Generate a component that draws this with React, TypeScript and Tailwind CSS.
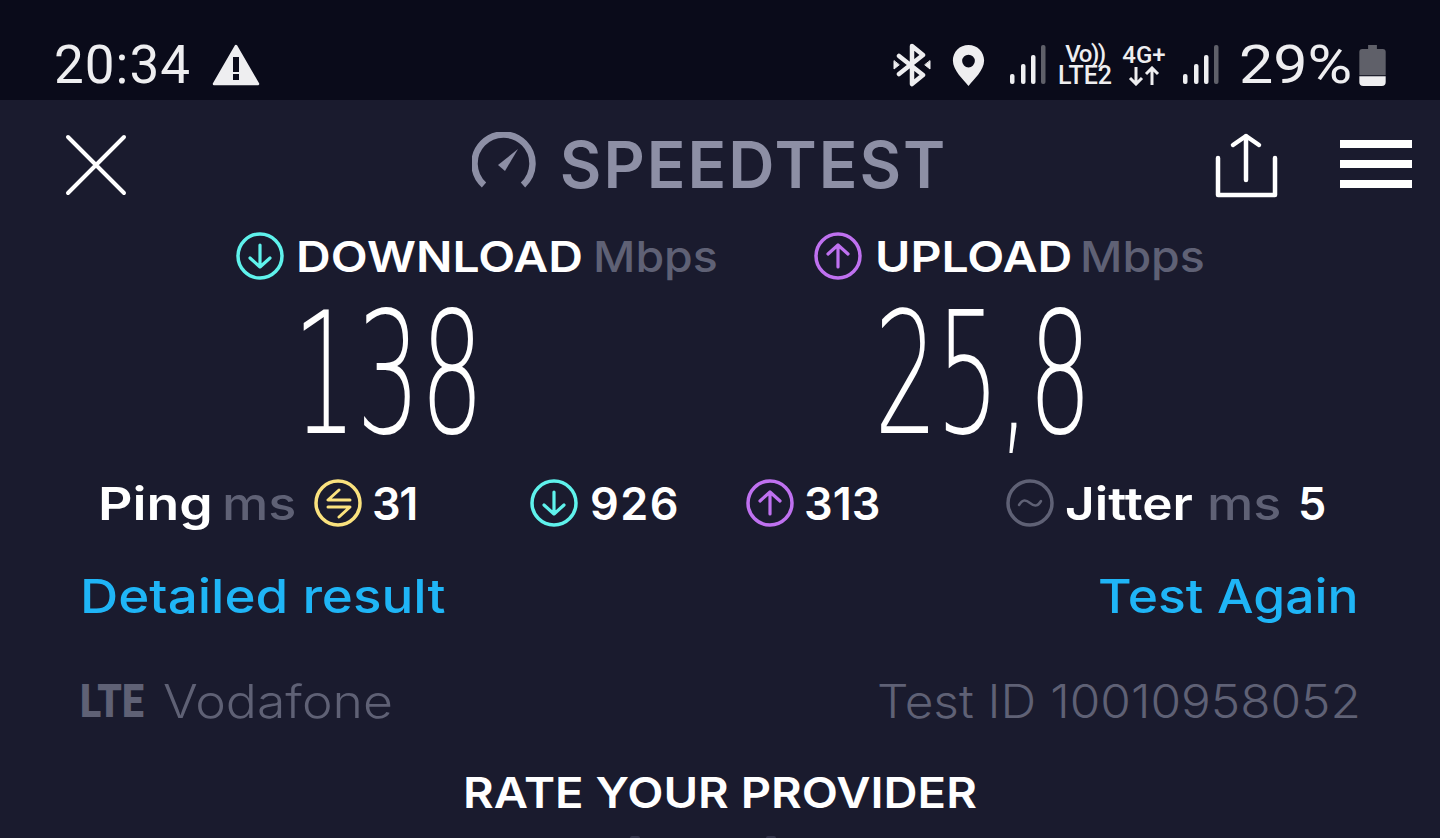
const sans = "font-['Inter',sans-serif]";
const wide = "origin-left whitespace-nowrap";

function RingIcon({ color, children }: { color: string; children: React.ReactNode }) {
  return (
    <svg width="48" height="48" viewBox="0 0 48 48" fill="none" stroke={color} strokeLinecap="round" strokeLinejoin="round" className="shrink-0">
      <circle cx="24" cy="24" r="22" strokeWidth="3.500" />
      {children}
    </svg>
  );
}

const DownArrow = ({ color }: { color: string }) => (
  <RingIcon color={color}>
    <path d="M24 13v22M14 26l10 9 10-9" strokeWidth="3.200" />
  </RingIcon>
);

const UpArrow = ({ color }: { color: string }) => (
  <RingIcon color={color}>
    <path d="M24 35V13M14 22l10-9 10 9" strokeWidth="3.200" />
  </RingIcon>
);

function Signal() {
  return (
    <svg width="36" height="40" viewBox="0 0 36 40" className="shrink-0">
      <rect x="0" y="29" width="4.500" height="10" rx="2" fill="#eeeef0" />
      <rect x="11" y="19" width="4.500" height="20" rx="2" fill="#eeeef0" />
      <rect x="21" y="10" width="4.500" height="29" rx="2" fill="#eeeef0" />
      <rect x="31" y="0" width="4.500" height="39" rx="2" fill="#5f6069" />
    </svg>
  );
}

function StatusBar() {
  return (
    <div className="flex h-[100px] shrink-0 items-center justify-between bg-[#0a0b1a] pl-[54px] pr-[53px] pt-[30px] text-[#eeeef0] font-['Roboto',sans-serif]">
      <div className="flex items-center">
        <span className="w-[158px] text-[53px] leading-none tracking-[1px]">20:34</span>
        <svg width="48" height="42" viewBox="0 0 48 42" className="shrink-0">
          <path d="M24 2 46 40H2Z" fill="#eeeef0" stroke="#eeeef0" strokeWidth="2.500" strokeLinejoin="round" />
          <rect x="21" y="13" width="6" height="15" fill="#0a0b1a" />
          <rect x="21" y="30" width="6" height="6" fill="#0a0b1a" />
        </svg>
      </div>
      <div className="flex items-center">
        <svg width="38" height="44" viewBox="0 0 38 44" fill="none" stroke="#eeeef0" strokeWidth="4.500" strokeLinejoin="round" strokeLinecap="round" className="shrink-0">
          <path d="M6 13 30 32 19 41V3L30 12 6 31" />
          <path d="M1 18v8l5-4ZM37 18v8l-5-4Z" fill="#eeeef0" strokeWidth="1" />
        </svg>
        <svg width="33" height="41" viewBox="0 0 32 42" className="ml-[21px] shrink-0">
          <path fillRule="evenodd" d="M16 0C7 0 0 7 0 16c0 10 11 20 16 26 5-6 16-16 16-26C32 7 25 0 16 0Zm0 10a6.500 6.500 0 1 1 0 13 6.500 6.500 0 0 1 0-13Z" fill="#eeeef0" />
        </svg>
        <div className="ml-[25px]">
          <Signal />
        </div>
        <div className="ml-[12px] flex w-[54px] flex-col items-center font-medium leading-[21px]">
          <span className="text-[24px] tracking-[-1.500px]">Vo))</span>
          <span className="text-[25px]">LTE2</span>
        </div>
        <div className="ml-[10px] flex w-[44px] flex-col items-center text-[24px] font-medium leading-[21px]">
          <span>4G+</span>
          <svg width="32" height="20" viewBox="0 0 32 20" fill="none" stroke="#eeeef0" strokeWidth="3" className="shrink-0">
            <path d="M8 1v17M2 12l6 6 6-6M24 19V2M18 8l6-6 6 6" />
          </svg>
        </div>
        <div className="ml-[17px]">
          <Signal />
        </div>
        <span className={`ml-[20px] w-[110px] scale-x-[1.13] text-[54px] leading-none ${wide}`}>29%</span>
        <svg width="28" height="41" viewBox="0 0 28 42" className="ml-[10px] shrink-0">
          <path d="M9 0h9v4h6a3 3 0 0 1 3 3v24H0V7a3 3 0 0 1 3-3h6Z" fill="#5f6069" />
          <path d="M0 32h27v6a4 4 0 0 1-4 4H4a4 4 0 0 1-4-4Z" fill="#eeeef0" />
        </svg>
      </div>
    </div>
  );
}

function TopBar() {
  return (
    <div className="flex h-[130px] shrink-0 items-center justify-between pl-[65px] pr-[28px]">
      <svg width="62" height="62" viewBox="0 0 62 62" stroke="#ffffff" strokeWidth="4" strokeLinecap="round" className="shrink-0">
        <path d="M3 3l56 56M59 3 3 59" />
      </svg>
      <div className="ml-[77px] flex items-center">
        <svg width="64" height="56" viewBox="0 0 64 56" fill="none" stroke="#8d8fa5" className="mb-[10px] shrink-0">
          <path d="M12 53A29 29 0 1 1 51 53" strokeWidth="6.500" />
          <path d="M46 17 26 33l7 6Z" fill="#8d8fa5" stroke="none" />
        </svg>
        <span className={`ml-[24px] text-[64px] font-semibold leading-none tracking-[2px] text-[#8d8fa5] ${sans}`}>SPEEDTEST</span>
      </div>
      <div className="flex items-center gap-[61px]">
        <svg width="64" height="65" viewBox="0 0 64 65" fill="none" stroke="#ffffff" strokeWidth="4.500" strokeLinecap="round" strokeLinejoin="round" className="shrink-0">
          <path d="M3 25v37h57V25" />
          <path d="M31 47V3M18 12l13-9 13 9" />
        </svg>
        <div className="mb-[2px] flex w-[72px] flex-col gap-[12px]">
          <div className="h-[8px] bg-white" />
          <div className="h-[8px] bg-white" />
          <div className="h-[8px] bg-white" />
        </div>
      </div>
    </div>
  );
}

function BigValue({ value, tracking }: { value: string; tracking?: string }) {
  return (
    <div className="flex w-[400px] justify-center">
      <span className={`block origin-center scale-x-[0.593] text-[169px] font-extralight leading-none text-white font-['DejaVu_Sans',sans-serif] ${tracking ?? ""}`}>{value}</span>
    </div>
  );
}

export default function App() {
  return (
    <div className={`flex h-[838px] w-[1440px] flex-col overflow-hidden bg-[#1a1b2e] ${sans}`}>
      <StatusBar />
      <TopBar />

      <div className="flex h-[52px] shrink-0 items-center justify-center gap-[99px] text-[43px] leading-none">
        <div className="flex items-center">
          <DownArrow color="#5ff2ec" />
          <span className={`ml-[12px] w-[285px] scale-x-[1.118] font-semibold text-white ${wide}`}>DOWNLOAD</span>
          <span className={`ml-[12px] w-[122px] scale-x-[1.08] font-medium text-[#5f6175] ${wide}`}>Mbps</span>
        </div>
        <div className="flex items-center">
          <UpArrow color="#bf71f0" />
          <span className={`ml-[13px] w-[195px] scale-x-[1.12] font-semibold text-white ${wide}`}>UPLOAD</span>
          <span className={`ml-[10px] w-[124px] scale-x-[1.08] font-medium text-[#5f6175] ${wide}`}>Mbps</span>
        </div>
      </div>

      <div className="mt-[8px] flex h-[169px] shrink-0 items-center pl-[188px]">
        <BigValue value="138" />
        <div className="ml-[194px]">
          <BigValue value="25,8" tracking="tracking-[-3px]" />
        </div>
      </div>

      <div className="mt-[20px] flex h-[48px] shrink-0 items-center pl-[98px] text-[45px] font-semibold leading-none text-white">
        <span className={`w-[112px] scale-x-[1.19] ${wide}`}>Ping</span>
        <span className={`ml-[12px] w-[73px] scale-x-[1.16] font-medium text-[#5f6175] ${wide}`}>ms</span>
        <div className="ml-[19px]">
          <RingIcon color="#fae27e">
            <path d="M25 11 14 21h22M14 28h22L25 38" strokeWidth="3" />
          </RingIcon>
        </div>
        <span className="ml-[10px] w-[46px] tracking-[-1.500px]">31</span>
        <div className="ml-[112px]">
          <DownArrow color="#5ff2ec" />
        </div>
        <span className="ml-[12px] w-[88px] tracking-[1.500px]">926</span>
        <div className="ml-[68px]">
          <UpArrow color="#bf71f0" />
        </div>
        <span className="ml-[10px] w-[75px]">313</span>
        <div className="ml-[127px]">
          <RingIcon color="#5f6175">
            <path d="M13 26c3-5 6-6 11-2s8 3 11-2" strokeWidth="2.500" />
          </RingIcon>
        </div>
        <span className={`ml-[11px] w-[127px] scale-x-[1.14] ${wide}`}>Jitter</span>
        <span className={`ml-[15px] w-[73px] scale-x-[1.16] font-medium text-[#5f6175] ${wide}`}>ms</span>
        <span className="ml-[18px]">5</span>
      </div>

      <div className="mt-[45px] flex shrink-0 items-center justify-between pl-[80px] pr-[84px] text-[47px] font-medium leading-none text-[#1fb5f6]">
        <span className={`w-[363px] scale-x-[1.127] ${wide}`}>Detailed result</span>
        <span className={`w-[258px] scale-x-[1.098] ${wide}`}>Test Again</span>
      </div>

      <div className="mt-[59px] flex shrink-0 items-center justify-between pl-[80px] pr-[82px] text-[46px] font-light leading-none text-[#5f6175]">
        <div className="flex items-center">
          <span className="block w-[83px] origin-left scale-x-[0.85] font-black font-['Roboto',sans-serif]">LTE</span>
          <span className={`w-[227px] scale-x-[1.124] ${wide}`}>Vodafone</span>
        </div>
        <span className={`w-[481px] scale-x-[1.077] ${wide}`}>Test ID 10010958052</span>
      </div>

      <div className="mt-[47px] shrink-0 pl-[463px] text-[43px] font-semibold leading-none text-white">
        <div className={`w-[513px] scale-x-[1.096] ${wide}`}>RATE YOUR PROVIDER</div>
      </div>

      {/* tips of the rating stars, cut off by the bottom edge */}
      <div className="mt-[22px] flex shrink-0 gap-[126px] pl-[630px]">
        <div className="h-[2px] w-[10px] rounded-t-full bg-[#33344a]" />
        <div className="h-[2px] w-[10px] rounded-t-full bg-[#33344a]" />
      </div>
    </div>
  );
}
